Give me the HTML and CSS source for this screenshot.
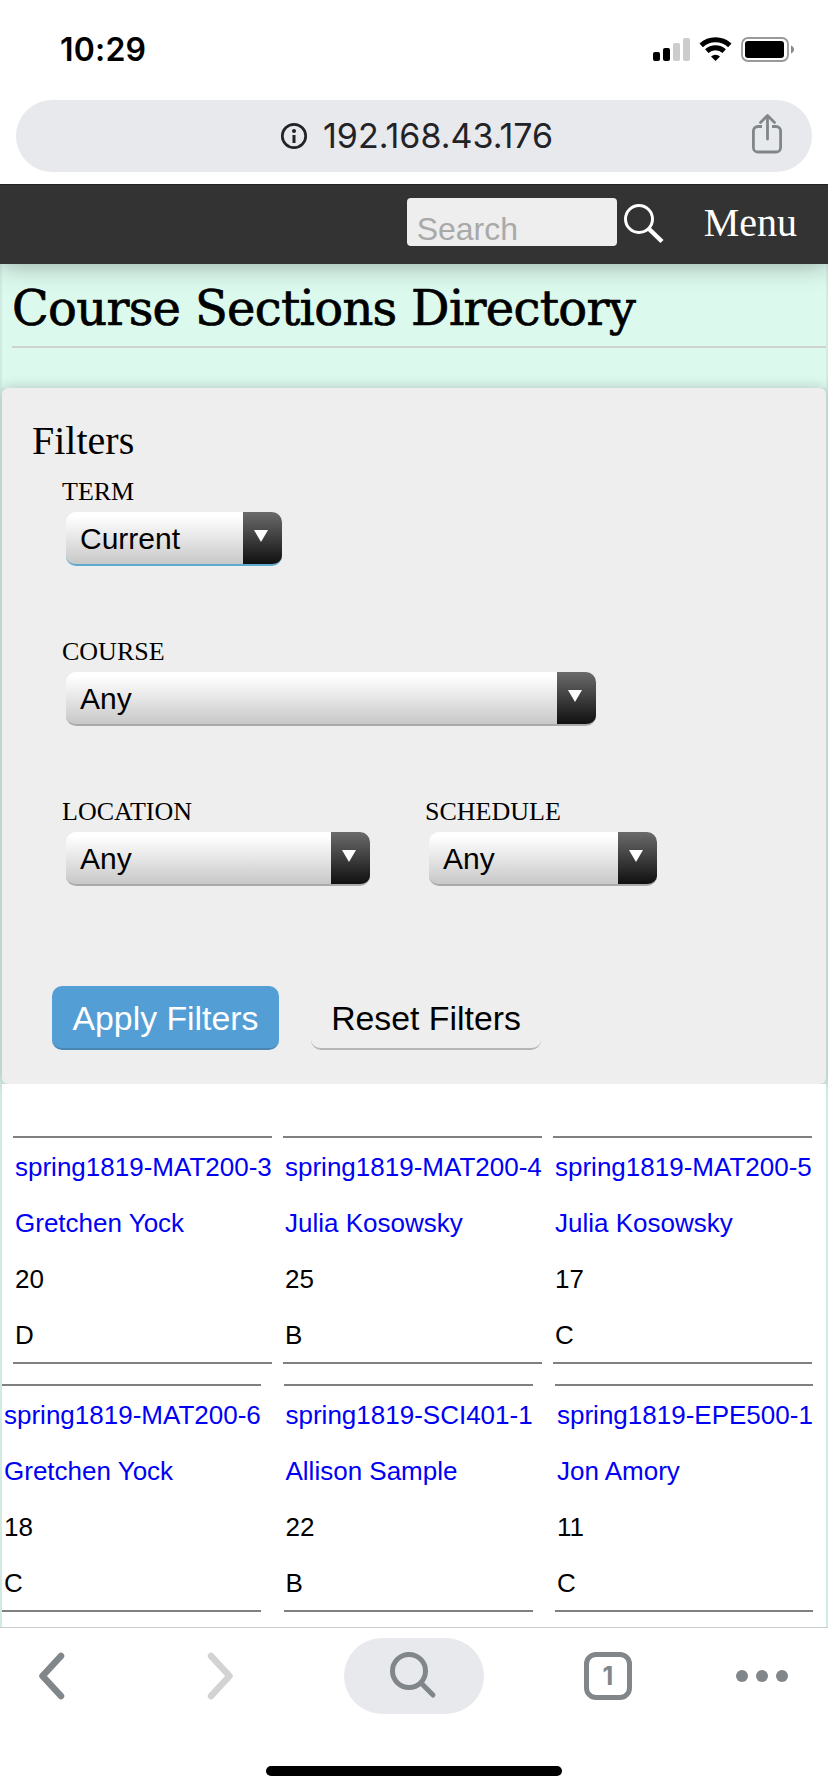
FILE: index.html
```html
<!DOCTYPE html>
<html lang="en">
<head>
<meta charset="utf-8">
<title>Course Sections Directory</title>
<link rel="stylesheet" href="styles.css">
</head>
<body>
<div class="status">
  <span class="time">10:29</span>
  <svg class="status-icons" width="146" height="30" viewBox="0 0 146 30">
    <g>
      <rect x="3" y="17" width="7" height="9" rx="2"/>
      <rect x="13" y="13" width="7" height="13" rx="2"/>
      <rect x="23" y="8" width="7" height="18" rx="2" fill="#ccc"/>
      <rect x="33" y="3" width="7" height="23" rx="2" fill="#ccc"/>
    </g>
    <g fill="none" stroke="#000" stroke-width="5">
      <path d="M51.2 10.3a21 21 0 0 1 28.6 0"/>
      <path d="M56.8 16.2a13 13 0 0 1 17.4 0"/>
    </g>
    <path d="M61 21.5a6.5 6.5 0 0 1 9 0L65.500 26z"/>
    <rect x="92" y="3" width="46" height="23" rx="6" fill="none" stroke="#999" stroke-width="1.800"/>
    <rect x="95" y="6" width="39" height="17" rx="3"/>
    <path d="M141 10.500c4 1.500 4 6.500 0 8z" fill="#888"/>
  </svg>
</div>
<div class="address">
  <svg class="info" width="28" height="28" viewBox="0 0 28 28"><circle cx="14" cy="14" r="11.700" fill="none" stroke="#222326" stroke-width="2.700"/><circle cx="14" cy="9" r="2" fill="#222326"/><rect x="12.500" y="13" width="3" height="8" fill="#222326"/></svg>
  <span class="url">192.168.43.176</span>
  <svg class="share" width="33" height="42" viewBox="0 0 33 42" fill="none" stroke="#80868a" stroke-width="2.800" stroke-linecap="round" stroke-linejoin="round"><path d="M11 13.500H7a4.600 4.600 0 0 0-4.600 4.600v16.300A4.600 4.600 0 0 0 7 39h18a4.600 4.600 0 0 0 4.600-4.600V18.100A4.600 4.600 0 0 0 25 13.500h-4" stroke-linecap="butt"/><path d="M16.500 26V3M9.500 9.500l7-7 7 7"/></svg>
</div>
<header class="nav">
  <div class="search">Search</div>
  <svg class="lens" width="42" height="42" viewBox="0 0 42 42" fill="none" stroke="#fff"><circle cx="16" cy="16" r="13.500" stroke-width="3"/><path d="M25 25l14 13.500" stroke-width="4.500"/></svg>
  <span class="menu">Menu</span>
</header>
<main class="page">
  <div class="heading"><h1>Course Sections Directory</h1></div>
  <section class="filters">
    <h2>Filters</h2>
    <div class="row"><div class="field"><label>TERM</label><div class="select term"><span>Current</span><i></i></div></div></div>
    <div class="row"><div class="field"><label>COURSE</label><div class="select course"><span>Any</span><i></i></div></div></div>
    <div class="row"><div class="field"><label>LOCATION</label><div class="select location"><span>Any</span><i></i></div></div><div class="field"><label>SCHEDULE</label><div class="select schedule"><span>Any</span><i></i></div></div></div>
    <div class="actions"><button class="apply">Apply Filters</button><button>Reset Filters</button></div>
  </section>
  <section class="results">
    <div class="cards first">
      <div class="card"><a>spring1819-MAT200-3</a><a>Gretchen Yock</a><p>20</p><p>D</p></div>
      <div class="card"><a>spring1819-MAT200-4</a><a>Julia Kosowsky</a><p>25</p><p>B</p></div>
      <div class="card"><a>spring1819-MAT200-5</a><a>Julia Kosowsky</a><p>17</p><p>C</p></div>
    </div>
    <div class="cards second">
      <div class="card"><a>spring1819-MAT200-6</a><a>Gretchen Yock</a><p>18</p><p>C</p></div>
      <div class="card"><a>spring1819-SCI401-1</a><a>Allison Sample</a><p>22</p><p>B</p></div>
      <div class="card"><a>spring1819-EPE500-1</a><a>Jon Amory</a><p>11</p><p>C</p></div>
    </div>
  </section>
</main>
<footer class="toolbar">
  <div class="tools">
    <svg class="back" width="26" height="48" viewBox="0 0 26 48"><path d="M22 4L3.500 24 22 44"/></svg>
    <svg class="forward" width="26" height="48" viewBox="0 0 26 48"><path d="M4 4l18.500 20L4 44"/></svg>
    <div class="find"><svg width="50" height="50" viewBox="0 0 50 50"><circle cx="20" cy="20" r="16.500"/><path d="M32 32l12 12"/></svg></div>
    <div class="tabs">1</div>
    <div class="dots"><b></b><b></b><b></b></div>
  </div>
  <div class="home"></div>
</footer>
</body>
</html>
```
FILE: styles.css
```css
* { box-sizing: border-box; }
body { margin: 0; width: 828px; height: 1792px; overflow: hidden; background: #fff; color: #000; font-family: "Liberation Sans", Arial, sans-serif; display: flex; flex-direction: column; }
svg { display: block; flex: none; }
h1, h2, p { margin: 0; font-weight: normal; }

.status { height: 100px; padding: 0 32px 0 60px; display: flex; justify-content: space-between; align-items: flex-start; }
.time { font: 600 32px/100px Inter, sans-serif; letter-spacing: 0.2px; }
.status-icons { margin-top: 35px; }
.address { height: 72px; margin: 0 16px 12px; border-radius: 36px; background: #e8e9ed; display: flex; align-items: center; padding-left: 264px; padding-right: 28px; }
.url { font: 400 34px/72px Inter, sans-serif; color: #222326; margin-left: 15px; letter-spacing: 0; white-space: nowrap; }
.share { margin-left: auto; margin-bottom: 5px; }

.nav { height: 80px; flex: none; background: #333; border-top: 1px solid #222; box-shadow: 0 0 26px rgba(0,0,0,.35); clip-path: inset(0 0 -40px 0); z-index: 2; position: relative; display: flex; justify-content: flex-end; align-items: flex-start; padding-right: 31px; color: #fff; }
.search { width: 210px; height: 48px; margin-top: 13px; padding: 14px 10px 0; border-radius: 4px; background: #eee; color: #a9a9a9; font-size: 32px; line-height: 34px; overflow: hidden; }
.lens { margin: 18px 0 0 6px; }
.menu { margin-left: 39px; font: 40px/75px "Liberation Serif", serif; }

.page { flex: none; height: 1363px; overflow: hidden; padding: 0 2px; background: #d2ebe2; }
.heading { height: 124px; background: #dcf9ee; padding: 4px 0 0 10px; }
h1 { height: 80px; border-bottom: 2px solid #cfd4d0; font: 48px/80px "DejaVu Serif", serif; letter-spacing: -0.7px; white-space: nowrap; -webkit-text-stroke: 0.7px #000; }

.filters { height: 696px; padding: 30px 30px 34px; border-radius: 6px; background: #eee; box-shadow: 0 0 14px rgba(0,0,0,.2); position: relative; }
h2 { font: 40px/45px "Liberation Serif", serif; margin-bottom: 13px; }
.row { display: flex; gap: 55px; padding-left: 30px; margin-bottom: 70px; }
label { display: block; font: 26px/32px "Liberation Serif", serif; margin-bottom: 4px; }
.select { height: 54px; margin-left: 4px; border-bottom: 2px solid #aaa; border-radius: 10px; background: linear-gradient(#fff 8%, #c8c8c8); display: flex; justify-content: space-between; overflow: hidden; font-size: 30px; line-height: 54px; padding-left: 14px; }
.select i { width: 39px; background: linear-gradient(#6b6b6b, #101010); padding: 18px 11px; }
.select i::before { content: ""; display: block; width: 14px; height: 12px; background: #fff; clip-path: polygon(0 0, 100% 0, 50% 100%); }
.term { width: 216px; border-color: #5eaccd; }
.course { width: 530px; }
.location { width: 304px; }
.schedule { width: 228px; }
.actions { display: flex; gap: 32px; padding-left: 20px; margin-top: 100px; }
button { width: 230px; height: 64px; border: 0; border-bottom: 2px solid #b5b5b5; border-radius: 10px; background: #eee; color: #000; padding: 3px 0 0; font: 33.8px/59px "Liberation Sans", sans-serif; white-space: nowrap; }
.apply { width: 227px; background: #549ed6; border-color: #4a86b4; color: #fff; }

.results { position: relative; z-index: 1; height: 543px; background: #fff; padding-top: 52px; }
.cards { display: grid; height: 228px; margin-bottom: 20px; }
.first { grid-template-columns: 259px 259px 259px; column-gap: 11px; padding-left: 11px; }
.second { grid-template-columns: 259px 249px 258px; justify-content: space-between; padding-right: 13px; }
.card { height: 228px; border: solid #808080; border-width: 2px 0; padding: 1px 0 0 2px; font-size: 26px; line-height: 56px; white-space: nowrap; }
.card a { display: block; color: #0000f5; }

.toolbar { height: 165px; flex: none; border-top: 1px solid #c8cccb; background: #fff; }
.tools { height: 96px; display: flex; align-items: center; padding-left: 39px; fill: none; stroke: #80868a; stroke-width: 6.500; stroke-linecap: round; stroke-linejoin: round; }
.forward { margin-left: 142px; stroke: #d3d3d3; }
.find { margin-left: 111px; width: 140px; height: 76px; border-radius: 38px; background: #e8e9ed; display: flex; align-items: center; justify-content: center; stroke-width: 5; }
.tabs { margin-left: 100px; width: 48px; height: 48px; border: 5px solid #80868a; border-radius: 12px; color: #80868a; font: 700 25px/38px Inter, sans-serif; text-align: center; }
.dots { margin-left: 104px; display: flex; gap: 8px; }
.dots b { width: 12px; height: 12px; border-radius: 50%; background: #80868a; }
.home { width: 296px; height: 10px; margin: 42px auto 0; border-radius: 5px; background: #000; }
```
